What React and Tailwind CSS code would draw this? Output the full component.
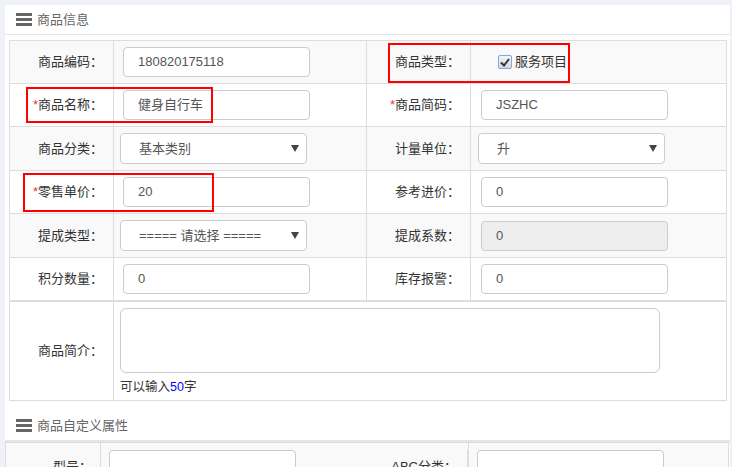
import React from 'react';

const font = { fontFamily: '"Liberation Sans", "Noto Sans CJK SC", sans-serif' };

const MenuIcon = () => (
  <svg width="16" height="13" viewBox="0 0 16 13" className="shrink-0">
    <rect x="0" y="0" width="16" height="3" fill="#666" />
    <rect x="0" y="5" width="16" height="3" fill="#666" />
    <rect x="0" y="10" width="16" height="3" fill="#666" />
  </svg>
);

const Label = ({ text, required }) => (
  <td className="border border-[#ddd] text-right pr-[10px] text-[13px] text-[#333] whitespace-nowrap">
    {required && <span className="text-[#e4393c]">*</span>}
    {text}：
  </td>
);

const TextInput = ({ value, disabled, offset = 'ml-[9px]' }) => (
  <div
    className={`${offset} w-[187px] h-[30px] border border-[#ccc] rounded-[4px] flex items-center pl-[14px] text-[13px] text-[#555] ${
      disabled ? 'bg-[#eee]' : 'bg-white'
    }`}
  >
    {value}
  </div>
);

const SelectBox = ({ value, offset = 'ml-[6px]' }) => (
  <div
    className={`${offset} w-[187px] h-[31px] border border-[#ccc] rounded-[4px] bg-white flex items-center justify-between pl-[18px] pr-[7px] text-[13px] text-[#555]`}
  >
    <span>{value}</span>
    <svg width="8" height="7" viewBox="0 0 8 7">
      <path d="M0 0 L8 0 L4 7 Z" fill="#444" />
    </svg>
  </div>
);

const Checkbox = () => (
  <span className="inline-flex items-center justify-center w-[14px] h-[14px] border border-[#7aa7ee] rounded-[2px] bg-gradient-to-b from-[#f4f4f4] to-[#d8d8d8]">
    <svg width="10" height="9" viewBox="0 0 10 9">
      <path d="M1 4.5 L4 7.5 L9 1" stroke="#333" strokeWidth="2" fill="none" />
    </svg>
  </span>
);

const Annot = ({ className }) => (
  <div className={`absolute border-2 border-[#f00] pointer-events-none ${className}`} />
);

const SectionHeader = ({ title, className }) => (
  <div className={`flex items-center gap-[5px] pl-[11px] border-b border-[#e5e5e5] text-[13px] text-[#666] ${className}`}>
    <MenuIcon />
    <span>{title}</span>
  </div>
);

export default function App() {
  return (
    <div className="bg-[#eef1f5] pt-[5px] pl-[5px] pr-[2px] h-[467px] overflow-hidden" style={font}>
      <div className="relative bg-white h-[462px]">
        <SectionHeader title="商品信息" className="h-[30px]" />

        <div className="px-[4px] pt-[5px] pr-[5px]">
          <table className="w-[717px] border-collapse table-fixed">
            <colgroup>
              <col className="w-[104px]" />
              <col className="w-[253px]" />
              <col className="w-[104px]" />
              <col className="w-[256px]" />
            </colgroup>
            <tbody>
              <tr className="h-[43px] bg-[#f9f9f9]">
                <Label text="商品编码" />
                <td className="border border-[#ddd]"><TextInput value="180820175118" /></td>
                <Label text="商品类型" />
                <td className="border border-[#ddd]">
                  <div className="flex items-center gap-[3px] ml-[27px] text-[13px] text-[#333]">
                    <Checkbox />
                    <span>服务项目</span>
                  </div>
                </td>
              </tr>
              <tr className="h-[43px] bg-white">
                <Label text="商品名称" required />
                <td className="border border-[#ddd]"><TextInput value="健身自行车" /></td>
                <Label text="商品简码" required />
                <td className="border border-[#ddd]"><TextInput value="JSZHC" offset="ml-[10px]" /></td>
              </tr>
              <tr className="h-[44px] bg-[#f9f9f9]">
                <Label text="商品分类" />
                <td className="border border-[#ddd]"><SelectBox value="基本类别" /></td>
                <Label text="计量单位" />
                <td className="border border-[#ddd]"><SelectBox value="升" offset="ml-[7px]" /></td>
              </tr>
              <tr className="h-[43px] bg-white">
                <Label text="零售单价" required />
                <td className="border border-[#ddd]"><TextInput value="20" /></td>
                <Label text="参考进价" />
                <td className="border border-[#ddd]"><TextInput value="0" offset="ml-[10px]" /></td>
              </tr>
              <tr className="h-[44px] bg-[#f9f9f9]">
                <Label text="提成类型" />
                <td className="border border-[#ddd]"><SelectBox value="===== 请选择 =====" /></td>
                <Label text="提成系数" />
                <td className="border border-[#ddd]"><TextInput value="0" disabled offset="ml-[10px]" /></td>
              </tr>
              <tr className="h-[43px] bg-white">
                <Label text="积分数量" />
                <td className="border border-[#ddd]"><TextInput value="0" /></td>
                <Label text="库存报警" />
                <td className="border border-[#ddd]"><TextInput value="0" offset="ml-[10px]" /></td>
              </tr>
              <tr className="h-[100px] bg-white border-t-2 border-[#ddd]">
                <Label text="商品简介" />
                <td className="border border-[#ddd] align-top" colSpan={3}>
                  <div className="ml-[6px] mt-[6px] w-[540px] h-[65px] border border-[#ccc] rounded-[6px] bg-white" />
                  <div className="ml-[6px] mt-[5px] text-[12.5px] text-[#333]">
                    可以输入<span className="text-[#00f]">50</span>字
                  </div>
                </td>
              </tr>
            </tbody>
          </table>
        </div>

        <SectionHeader title="商品自定义属性" className="h-[31px] mt-[10px] border-b-2" />

        <table className="w-[723px] border-collapse table-fixed">
          <colgroup>
            <col className="w-[95px]" />
            <col className="w-[368px]" />
            <col className="w-[260px]" />
          </colgroup>
          <tbody>
            <tr className="h-[43px] bg-[#f9f9f9]">
              <td className="border border-[#ddd] text-right pr-[8px] text-[13px] text-[#333] whitespace-nowrap align-top pt-[14px]">型号：</td>
              <td className="border border-[#ddd] align-top pt-[7px]">
                <div className="flex items-start">
                  <div className="ml-[8px] w-[187px] h-[30px] border border-[#ccc] rounded-[4px] bg-white" />
                  <div className="ml-auto w-[163px] pr-[10px] pt-[7px] text-right text-[13px] text-[#333] whitespace-nowrap border-r border-[#ddd] h-[36px]">ABC分类：</div>
                </div>
              </td>
              <td className="border border-[#ddd] align-top pt-[7px]">
                <div className="ml-[8px] w-[187px] h-[30px] border border-[#ccc] rounded-[4px] bg-white" />
              </td>
            </tr>
          </tbody>
        </table>

        <Annot className="left-[21px] top-[82px] w-[187px] h-[36px]" />
        <Annot className="left-[383px] top-[38px] w-[182px] h-[40px]" />
        <Annot className="left-[18px] top-[168px] w-[191px] h-[39px]" />
      </div>
    </div>
  );
}
